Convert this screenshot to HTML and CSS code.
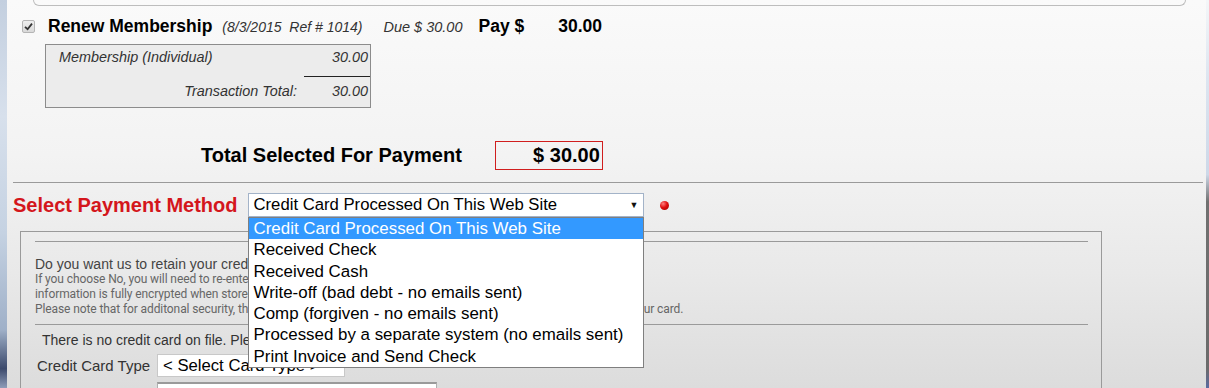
FILE: index.html
```html
<!DOCTYPE html>
<html>
<head>
<meta charset="utf-8">
<link rel="stylesheet" href="styles.css">
</head>
<body>
<div class="screen">
  <div class="edge edge-left"></div>
  <div class="page">
    <div class="prev-box"></div>

    <div class="item-head">
      <span class="check"><svg width="9" height="9" viewBox="0 0 9 9"><path d="M1 4.8 L3.6 7.2 L8 1.6" fill="none" stroke="#333" stroke-width="1.8"/></svg></span>
      <span class="item-title">Renew Membership</span>
      <span class="item-meta">(8/3/2015&nbsp;&nbsp;Ref # 1014)</span>
      <span class="item-due">Due $ 30.00</span>
      <span class="item-pay">Pay $</span>
      <span class="item-amount">30.00</span>
    </div>

    <div class="lines">
      <div class="line-row">
        <div class="line-label left">Membership (Individual)</div>
        <div class="line-amt">30.00</div>
      </div>
      <div class="line-row total">
        <div class="line-label right">Transaction Total:</div>
        <div class="line-amt ruled">30.00</div>
      </div>
    </div>

    <div class="total-row">
      <span class="total-label">Total Selected For Payment</span>
      <span class="total-box">$ 30.00</span>
    </div>

    <div class="rule main-rule"></div>

    <div class="method-row">
      <span class="method-label">Select Payment Method</span>
      <div class="fake-select method-select">
        <span class="fs-text">Credit Card Processed On This Web Site</span>
        <span class="fs-arrow">&#9660;</span>
        <ul class="options">
          <li class="active">Credit Card Processed On This Web Site</li>
          <li>Received Check</li>
          <li>Received Cash</li>
          <li>Write-off (bad debt - no emails sent)</li>
          <li>Comp (forgiven - no emails sent)</li>
          <li>Processed by a separate system (no emails sent)</li>
          <li>Print Invoice and Send Check</li>
        </ul>
      </div>
      <span class="req-dot"></span>
    </div>

    <div class="cc-box">
      <div class="rule inner-rule"></div>
      <div class="retain-q">Do you want us to retain your credit card information on file for future payments?</div>
      <div class="retain-note">
        <div>If you choose No, you will need to re-enter your credit card information each time you make a payment. Your</div>
        <div>information is fully encrypted when stored and is never visible to anyone, including our staff.</div>
        <div>Please note that for additonal security, the security code is never stored and must be re-entered each time you use your card.</div>
      </div>
      <div class="rule inner-rule second"></div>
      <div class="no-card">There is no credit card on file. Please enter your card details below.</div>
      <div class="cc-row">
        <span class="cc-label">Credit Card Type</span>
        <div class="fake-select card-select"><span class="fs-text">&lt; Select Card Type &gt;</span></div>
      </div>
      <div class="cc-row">
        <span class="cc-label"></span>
        <div class="text-input"></div>
      </div>
    </div>
  </div>
  <div class="edge edge-right"></div>
</div>
</body>
</html>
```

FILE: styles.css
```css
* { box-sizing: border-box; }
html, body { margin: 0; padding: 0; }
body {
  font-family: "Liberation Sans", Arial, sans-serif;
  color: #000;
  background: #c9d5e4;
  width: 1209px;
  height: 388px;
  overflow: hidden;
}
.screen {
  display: flex;
  height: 388px;
}
.edge { flex: 0 0 auto; }
.edge-left {
  width: 7px;
  background: linear-gradient(180deg, #c3cfdf 0%, #d7e0ec 30%, #c5d2e2 60%, #9fb0c8 85%, #3c4a6c 95%, #8e9cb8 100%);
}
.edge-right {
  width: 3px;
  background: linear-gradient(180deg, #f4f6f8 0%, #dde5f0 20%, #cdd8e8 45%, #707070 52%, #6b6b6b 95%, #5a6aa0 100%);
}
.page {
  flex: 1 1 auto;
  position: relative;
  background: linear-gradient(180deg, #fafafa 0%, #f3f3f3 40%, #e9e9e9 70%, #dcdcdc 100%);
  overflow: hidden;
}
.prev-box {
  height: 6px;
  margin: 0 20px 0 26px;
  border: 1px solid #bdbdbd;
  border-top: none;
  border-radius: 0 0 6px 6px;
}

/* item heading */
.item-head {
  display: flex;
  align-items: baseline;
  height: 20px;
  margin-top: 10px;
  padding-left: 15px;
  line-height: 20px;
}
.check {
  align-self: center;
  width: 13px;
  height: 13px;
  border: 1px solid #b5b5b5;
  border-radius: 2px;
  background: linear-gradient(180deg, #eeeeee, #d9d9d9);
  display: flex;
  align-items: center;
  justify-content: center;
  margin-right: 13px;
}
.item-title {
  font-size: 17.5px;
  font-weight: bold;
  margin-right: 10px;
}
.item-meta {
  font-size: 14px;
  font-style: italic;
  color: #333;
  margin-right: 21px;
}
.item-due {
  font-size: 14.5px;
  font-style: italic;
  color: #333;
  margin-right: 16px;
}
.item-pay {
  font-size: 17.5px;
  font-weight: bold;
  margin-right: 34px;
}
.item-amount {
  font-size: 17.5px;
  font-weight: bold;
}

/* line items */
.lines {
  width: 326px;
  height: 64px;
  margin: 8px 0 0 38px;
  border: 1px solid #8c8c8c;
  background: #ececec;
  font-size: 14.4px;
  font-style: italic;
  color: #333;
  padding-top: 1px;
}
.line-row {
  display: flex;
  height: 23px;
  line-height: 23px;
}
.line-row.total {
  margin-top: 11px;
  height: 24px;
}
.line-label { flex: 1 1 auto; }
.line-label.left { padding-left: 13px; }
.line-label.right { text-align: right; padding-right: 7px; }
.line-amt {
  flex: 0 0 66px;
  text-align: right;
  padding-right: 2px;
}
.line-amt.ruled { border-top: 1px solid #222; line-height: 28px; margin-top: -4px; height: 28px; }

/* total */
.total-row {
  display: flex;
  align-items: center;
  height: 29px;
  margin-top: 33px;
  padding-left: 194px;
}
.total-label {
  font-size: 20px;
  font-weight: bold;
  margin-right: 33px;
}
.total-box {
  width: 108px;
  height: 29px;
  border: 1px solid #d01e1e;
  font-size: 20px;
  font-weight: bold;
  text-align: right;
  line-height: 27px;
  padding-right: 2px;
}

.rule { height: 1px; background: #9a9a9a; }
.main-rule { margin: 12px 3px 0 6px; }

/* payment method */
.method-row {
  display: flex;
  align-items: center;
  height: 24px;
  margin-top: 10px;
  padding-left: 6px;
}
.method-label {
  font-size: 20px;
  font-weight: bold;
  color: #d4161c;
  margin-right: 10px;
}
.fake-select {
  position: relative;
  background: #fff;
  display: flex;
  align-items: center;
  font-size: 16.7px;
  color: #000;
}
.method-select {
  width: 396px;
  height: 24px;
  border: 1px solid #a3b3c8;
  padding-left: 5px;
}
.fs-text { flex: 1 1 auto; white-space: nowrap; }
.fs-arrow {
  font-size: 9px;
  margin-right: 4px;
  color: #111;
}
.options {
  position: absolute;
  left: -1px;
  top: 23px;
  width: 396px;
  margin: 0;
  padding: 0;
  list-style: none;
  background: #fff;
  border: 1px solid #7f7f7f;
  z-index: 5;
}
.options li {
  height: 21.3px;
  line-height: 21.3px;
  padding-left: 5px;
  font-size: 16.9px;
  white-space: nowrap;
}
.options li.active {
  background: #3399ff;
  color: #fff;
}
.req-dot {
  width: 9px;
  height: 9px;
  border-radius: 50%;
  margin-left: 16px;
  margin-top: 1px;
  background: radial-gradient(circle at 35% 30%, #ff8080 0%, #e01010 45%, #9a0000 100%);
}

/* credit card box */
.cc-box {
  width: 1082px;
  height: 200px;
  margin: 14px 0 0 13px;
  border: 1px solid #9a9a9a;
  padding: 9px 13px 0 14px;
}
.inner-rule { margin: 0; }
.retain-q {
  font-size: 14px;
  color: #444;
  margin-top: 14px;
  line-height: 16px;
  white-space: nowrap;
}
.retain-note {
  font-family: Roboto, "Liberation Sans", sans-serif;
  font-size: 12px;
  letter-spacing: -0.1px;
  color: #666;
  line-height: 15px;
  white-space: nowrap;
}
.inner-rule.second { margin-top: 7px; }
.no-card {
  font-size: 14px;
  color: #333;
  padding-left: 7px;
  margin-top: 7px;
  line-height: 16px;
  white-space: nowrap;
}
.cc-row {
  display: flex;
  align-items: center;
  margin-top: 6px;
}
.cc-row + .cc-row { margin-top: 5px; }
.cc-label {
  width: 122px;
  padding-left: 2px;
  font-size: 15px;
  color: #333;
}
.card-select {
  width: 188px;
  height: 23px;
  border: 1px solid #c8c8c8;
  padding-left: 5px;
}
.text-input {
  width: 280px;
  height: 24px;
  background: #fff;
  border: 1px solid #b0b0b0;
  border-top: 2px solid #9a9a9a;
}
```
